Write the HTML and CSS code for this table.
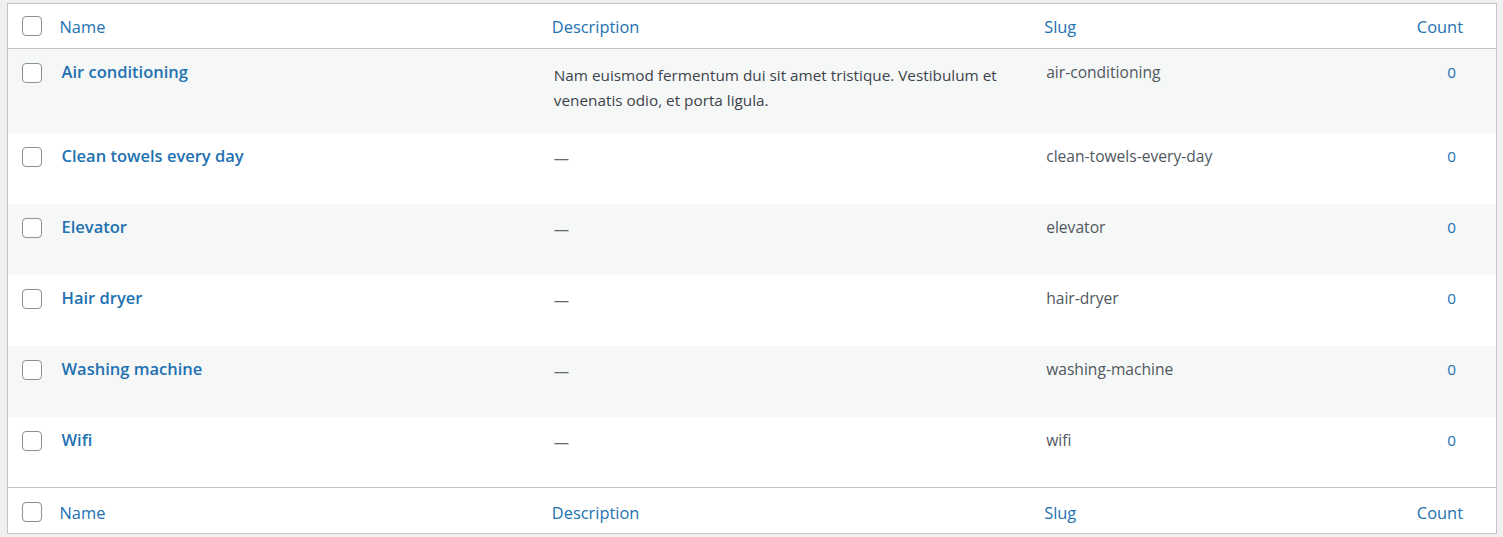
FILE: index.html
```html
<!DOCTYPE html>
<html lang="en">
<head>
<meta charset="utf-8">
<title>Amenities</title>
<link rel="stylesheet" href="styles.css">
</head>
<body>
<table class="list">
  <colgroup>
    <col class="c-cb">
    <col class="c-name">
    <col class="c-desc">
    <col class="c-slug">
    <col class="c-count">
  </colgroup>
  <thead>
    <tr class="head">
      <th class="cb"><span class="box"></span></th>
      <th class="th-name">Name</th>
      <th class="th-desc">Description</th>
      <th class="th-slug">Slug</th>
      <th class="th-count">Count</th>
    </tr>
  </thead>
  <tbody>
    <tr class="row alt first">
      <td class="cb"><span class="box"></span></td>
      <td class="name">Air conditioning</td>
      <td class="desc">Nam euismod fermentum dui sit amet tristique. Vestibulum et venenatis odio, et porta ligula.</td>
      <td class="slug">air-conditioning</td>
      <td class="count">0</td>
    </tr>
    <tr class="row">
      <td class="cb"><span class="box"></span></td>
      <td class="name">Clean towels every day</td>
      <td class="desc dash">—</td>
      <td class="slug">clean-towels-every-day</td>
      <td class="count">0</td>
    </tr>
    <tr class="row alt">
      <td class="cb"><span class="box"></span></td>
      <td class="name">Elevator</td>
      <td class="desc dash">—</td>
      <td class="slug">elevator</td>
      <td class="count">0</td>
    </tr>
    <tr class="row">
      <td class="cb"><span class="box"></span></td>
      <td class="name">Hair dryer</td>
      <td class="desc dash">—</td>
      <td class="slug">hair-dryer</td>
      <td class="count">0</td>
    </tr>
    <tr class="row alt">
      <td class="cb"><span class="box"></span></td>
      <td class="name">Washing machine</td>
      <td class="desc dash">—</td>
      <td class="slug">washing-machine</td>
      <td class="count">0</td>
    </tr>
    <tr class="row">
      <td class="cb"><span class="box"></span></td>
      <td class="name">Wifi</td>
      <td class="desc dash">—</td>
      <td class="slug">wifi</td>
      <td class="count">0</td>
    </tr>
  </tbody>
  <tfoot>
    <tr class="foot">
      <th class="cb"><span class="box"></span></th>
      <th class="th-name">Name</th>
      <th class="th-desc">Description</th>
      <th class="th-slug">Slug</th>
      <th class="th-count">Count</th>
    </tr>
  </tfoot>
</table>
</body>
</html>
```

FILE: styles.css
```css
html, body {
  margin: 0;
  background: #f0f0f1;
}
body {
  padding: 3px 6px 0 7px;
  font-family: "Open Sans", "Noto Sans", "Liberation Sans", sans-serif;
  font-size: 15.3px;
  color: #3c434a;
}
.list {
  width: 1490px;
  border: 1px solid #c3c4c7;
  border-collapse: collapse;
  table-layout: fixed;
  background: #fff;
}
.c-cb { width: 42px; }
.c-name { width: 492px; }
.c-desc { width: 492px; }
.c-slug { width: 369px; }
.c-count { width: 93px; }

th, td {
  text-align: left;
  font-weight: 400;
  padding: 0;
}
.head th, .foot th {
  color: #2271b1;
  font-size: 16.4px;
  vertical-align: middle;
  box-sizing: border-box;
}
.head th { height: 45px; padding-top: 0; }
.foot th { height: 46px; padding-top: 4px; }
.head { border-bottom: 1px solid #c3c4c7; }
.foot { border-top: 1px solid #c3c4c7; }
.th-name, .th-desc, .th-slug { padding-left: 10px; }
.th-count { text-align: right; }
.head .th-count, .foot .th-count { padding-right: 33px; }

.head th.cb { padding-top: 0; }
.foot th.cb { padding-top: 2px; }
.cb { padding-left: 14px; }
.box {
  display: block;
  width: 18px;
  height: 18px;
  border: 1px solid #8c8f94;
  border-radius: 4px;
  background: #fff;
}
.row td {
  height: 71px;
  box-sizing: border-box;
  vertical-align: top;
  padding: 11px 12px 0 12px;
  line-height: 25px;
}
.row td.cb { padding: 14px 0 0 14px; }
.row.first td { height: 84px; }
.alt { background: #f6f7f7; }
.row td.name {
  color: #2271b1;
  font-weight: 600;
  font-size: 16.5px;
  padding-top: 10px;
}
.row td.desc { padding-top: 14px; }
.row td.dash { color: #646970; padding-top: 13px; }
.slug { color: #50575e; font-size: 15.6px; }
.row td.count {
  color: #2271b1;
  text-align: center;
  padding-left: 4px;
  padding-right: 0;
}
```
